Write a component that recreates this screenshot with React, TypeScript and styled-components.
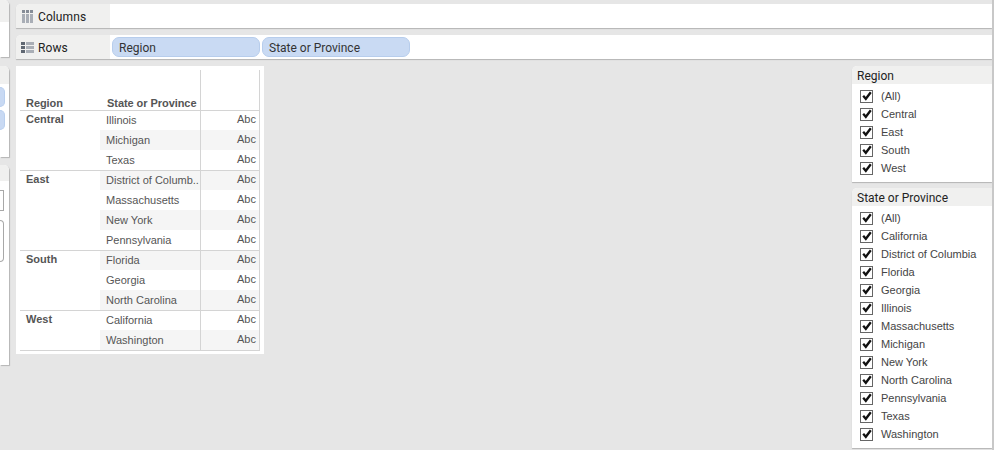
import React from "react";
import styled, { createGlobalStyle } from "styled-components";

const Global = createGlobalStyle`
  html, body { margin: 0; padding: 0; background: #e6e6e6; }
  body { font-family: "Liberation Sans", Arial, sans-serif; }
`;

const Page = styled.div`
  width: 994px;
  height: 450px;
  overflow: hidden;
  display: flex;
  background: #e6e6e6;
  box-sizing: border-box;
  border-right: 2px solid #c8c8c8;
`;

const Sidebar = styled.div`
  width: 9px;
  flex: none;
  display: flex;
  flex-direction: column;
`;

const SideCard = styled.div<{ $h: number; $head: number; $gap: number }>`
  height: ${(p) => p.$h}px;
  margin-bottom: ${(p) => p.$gap}px;
  background: #fff;
  box-shadow: 1px 1px 1px #b4b4b4;
  border-top-right-radius: 5px;
  overflow: hidden;
  flex: none;
  &::before {
    content: "";
    display: block;
    height: ${(p) => p.$head}px;
    background: #f0f0ef;
  }
`;

const SidePills = styled.div`
  display: flex;
  flex-direction: column;
  gap: 3px;
  margin-top: 3px;
`;

const SidePill = styled.div`
  width: 5px;
  height: 20px;
  background: #c8d9f3;
  border: 1px solid #b9cfee;
  border-left: 0;
  box-sizing: border-box;
  border-radius: 0 6px 6px 0;
`;

const SideInputs = styled.div`
  display: flex;
  flex-direction: column;
  gap: 9px;
  margin-top: 9px;
`;

const SideInput = styled.div<{ $h: number; $r: number }>`
  width: 4px;
  height: ${(p) => p.$h}px;
  box-sizing: border-box;
  border: 1px solid #a8a8a8;
  border-left: 0;
  border-radius: 0 ${(p) => p.$r}px ${(p) => p.$r}px 0;
  background: #fff;
`;

const Main = styled.div`
  flex: 1;
  min-width: 0;
  margin-left: 7px;
  padding-top: 4px;
  display: flex;
  flex-direction: column;
`;

const Shelf = styled.div`
  height: 24px;
  margin-bottom: 7px;
  display: flex;
  background: #fff;
  border-top-left-radius: 5px;
  box-shadow: 0 1px 1px #b4b4b4;
  flex: none;
`;

const ShelfHead = styled.div`
  width: 94px;
  flex: none;
  display: flex;
  align-items: center;
  gap: 4px;
  padding-left: 5px;
  box-sizing: border-box;
  background: #f0f0ef;
  border-top-left-radius: 5px;
`;

const ShelfLabel = styled.span`
  padding-top: 2px;
  font: 12px Roboto, sans-serif;
  letter-spacing: 0.1px;
  color: #222;
`;

const ShelfIcon = styled.svg`
  width: 13px;
  height: 13px;
  flex: none;
`;

const ShelfPills = styled.div`
  display: flex;
  align-items: center;
  gap: 2px;
  padding-left: 2px;
`;

const Pill = styled.div`
  width: 148px;
  height: 20px;
  box-sizing: border-box;
  padding: 1px 0 0 6px;
  display: flex;
  align-items: center;
  background: #c9daf3;
  border: 1px solid #b7cdec;
  border-radius: 7px;
  font: 12px Roboto, sans-serif;
  color: #333;
`;

const Content = styled.div`
  display: flex;
  justify-content: space-between;
  align-items: flex-start;
`;

const View = styled.div`
  width: 248px;
  height: 288px;
  padding: 4px;
  box-sizing: border-box;
  background: #fff;
  font-size: 11px;
  color: #555;
`;

const HeaderRow = styled.div`
  display: grid;
  grid-template-columns: 80px 100px 60px;
  height: 41px;
  border-bottom: 1px solid #d4d4d4;
  box-sizing: border-box;
  font-weight: 700;
  line-height: 14px;
  letter-spacing: -0.06px;
`;

const HeaderCell = styled.div<{ $pad?: number; $rule?: boolean }>`
  padding: 26px 0 0 ${(p) => p.$pad ?? 0}px;
  white-space: nowrap;
  ${(p) => p.$rule && "border-left: 1px solid #d4d4d4; border-right: 1px solid #d4d4d4;"}
`;

const Group = styled.div`
  display: grid;
  grid-template-columns: 80px 160px;
  border-bottom: 1px solid #d4d4d4;
`;

const GroupName = styled.div`
  font-weight: 700;
  padding: 1px 0 0 6px;
  line-height: 14px;
`;

const Row = styled.div<{ $shade: boolean; $h: number }>`
  display: grid;
  grid-template-columns: 100px 60px;
  height: ${(p) => p.$h}px;
  background: ${(p) => (p.$shade ? "#f5f5f5" : "#fff")};
  line-height: ${(p) => p.$h}px;
`;

const StateCell = styled.div`
  padding-left: 6px;
  white-space: nowrap;
  overflow: hidden;
`;

const ValueCell = styled.div<{ $h: number }>`
  border-left: 1px solid #d4d4d4;
  border-right: 1px solid #d4d4d4;
  text-align: right;
  padding-right: 3px;
  line-height: ${(p) => p.$h - 2}px;
`;

const Filters = styled.div`
  width: 140px;
  flex: none;
  display: flex;
  flex-direction: column;
  gap: 6px;
`;

const FilterCard = styled.div`
  background: #fff;
  border-top-left-radius: 5px;
  box-shadow: 0 1px 1px #b4b4b4;
  padding-bottom: 5px;
`;

const FilterTitle = styled.div`
  height: 18px;
  box-sizing: border-box;
  padding: 2px 5px 0;
  display: flex;
  align-items: center;
  background: #f0f0ef;
  border-top-left-radius: 5px;
  font: 12px Roboto, sans-serif;
  color: #222;
  margin-bottom: 3px;
`;

const FilterRow = styled.div`
  height: 18px;
  display: flex;
  align-items: center;
  padding-left: 8px;
  gap: 8px;
  font-size: 11px;
  color: #444;
`;

const Check = styled.span`
  width: 13px;
  height: 13px;
  box-sizing: border-box;
  border: 1px solid #666;
  flex: none;
  display: flex;
  align-items: center;
  justify-content: center;
  background: #fff;
`;

const CheckMark = () => (
  <svg width="10" height="10" viewBox="0 0 10 10">
    <path d="M1.2 4.8 L3.8 7.8 L8.8 1.2" fill="none" stroke="#111" strokeWidth="2.3" />
  </svg>
);

const ColumnsIcon = () => (
  <ShelfIcon viewBox="0 0 13 13">
    <path d="M1 0h3v3H1zM5 0h3v3H5zM9 0h3v3H9z" fill="#858c96" />
    <path d="M1 4h3v9H1zM5 4h3v9H5zM9 4h3v9H9z" fill="#a9aeb6" />
  </ShelfIcon>
);

const RowsIcon = () => (
  <ShelfIcon viewBox="0 0 13 13">
    <path d="M0 1h4v3H0zM0 5h4v3H0zM0 9h4v3H0z" fill="#5f6772" />
    <path d="M5 1h8v3H5zM5 5h8v3H5zM5 9h8v3H5z" fill="#a9aeb6" />
  </ShelfIcon>
);

const groups = [
  { name: "Central", states: ["Illinois", "Michigan", "Texas"] },
  { name: "East", states: ["District of Columb..", "Massachusetts", "New York", "Pennsylvania"] },
  { name: "South", states: ["Florida", "Georgia", "North Carolina"] },
  { name: "West", states: ["California", "Washington"] },
];

const shaded = new Set(["Michigan", "District of Columb..", "New York", "Florida", "North Carolina", "Washington"]);

const regionFilter = ["(All)", "Central", "East", "South", "West"];
const stateFilter = [
  "(All)", "California", "District of Columbia", "Florida", "Georgia", "Illinois", "Massachusetts",
  "Michigan", "New York", "North Carolina", "Pennsylvania", "Texas", "Washington",
];

const Filter = ({ title, items }: { title: string; items: string[] }) => (
  <FilterCard>
    <FilterTitle>{title}</FilterTitle>
    {items.map((item) => (
      <FilterRow key={item}>
        <Check><CheckMark /></Check>
        {item}
      </FilterRow>
    ))}
  </FilterCard>
);

export default function App() {
  return (
    <Page>
      <Global />
      <Sidebar>
        <SideCard $h={57} $head={22} $gap={9} />
        <SideCard $h={91} $head={18} $gap={8}>
          <SidePills><SidePill /><SidePill /></SidePills>
        </SideCard>
        <SideCard $h={200} $head={16} $gap={0}>
          <SideInputs>
            <SideInput $h={21} $r={0} />
            <SideInput $h={42} $r={5} />
          </SideInputs>
        </SideCard>
      </Sidebar>
      <Main>
        <Shelf>
          <ShelfHead><ColumnsIcon /><ShelfLabel>Columns</ShelfLabel></ShelfHead>
        </Shelf>
        <Shelf>
          <ShelfHead><RowsIcon /><ShelfLabel>Rows</ShelfLabel></ShelfHead>
          <ShelfPills>
            <Pill>Region</Pill>
            <Pill>State or Province</Pill>
          </ShelfPills>
        </Shelf>
        <Content>
          <View>
            <HeaderRow>
              <HeaderCell $pad={6}>Region</HeaderCell>
              <HeaderCell $pad={7}>State or Province</HeaderCell>
              <HeaderCell $rule />
            </HeaderRow>
            {groups.map((g) => (
              <Group key={g.name}>
                <GroupName>{g.name}</GroupName>
                <div>
                  {g.states.map((s, i) => {
                    const h = i === 0 ? 19 : 20;
                    return (
                      <Row key={s} $shade={shaded.has(s)} $h={h}>
                        <StateCell>{s}</StateCell>
                        <ValueCell $h={h}>Abc</ValueCell>
                      </Row>
                    );
                  })}
                </div>
              </Group>
            ))}
          </View>
          <Filters>
            <Filter title="Region" items={regionFilter} />
            <Filter title="State or Province" items={stateFilter} />
          </Filters>
        </Content>
      </Main>
    </Page>
  );
}
